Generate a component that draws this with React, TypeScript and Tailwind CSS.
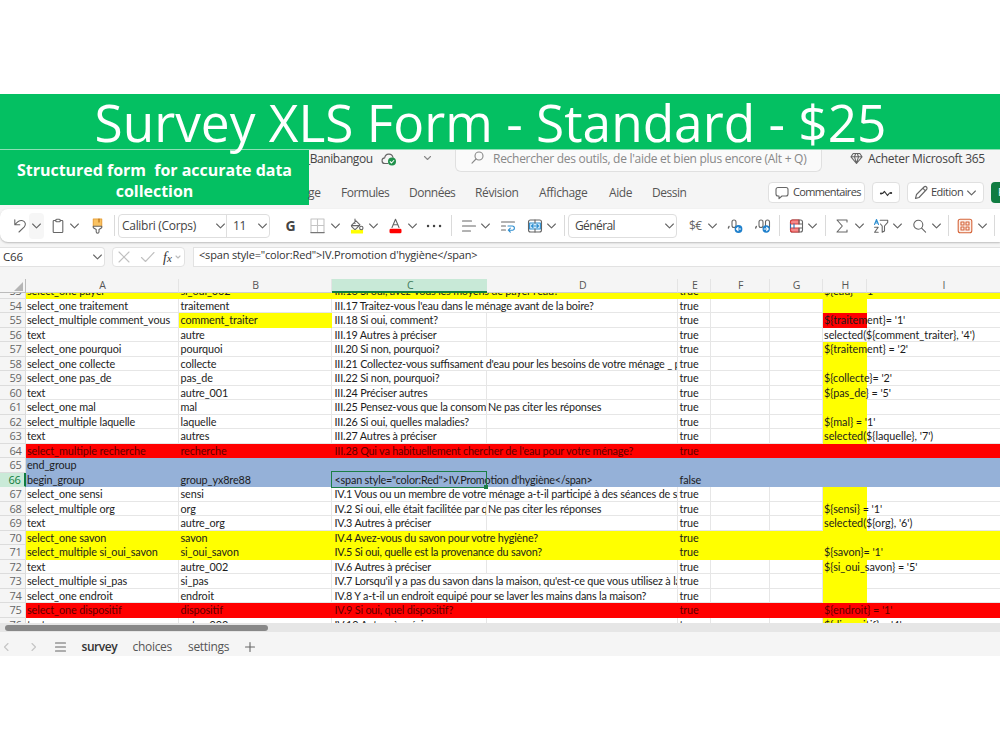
import type { ReactNode } from "react";
import clsx from "clsx";

type Row = {
  n: number;
  a?: string;
  b?: string;
  c?: string;
  d?: string;
  e?: string;
  h?: string;
  fill?: "yellow" | "red" | "blue";
  bFill?: boolean;
  hFill?: "yellow" | "red";
};

const ROWS: Row[] = [
  { n: 53, a: "select_one payer", b: "si_oui_002", c: "III.16 Si oui, avez-vous les moyens de payer l'eau?", e: "true", h: "${eau} = '1'", fill: "yellow" },
  { n: 54, a: "select_one traitement", b: "traitement", c: "III.17 Traitez-vous l'eau dans le ménage avant de la boire?", e: "true", hFill: "yellow" },
  { n: 55, a: "select_multiple comment_vous", b: "comment_traiter", c: "III.18 Si oui, comment?", e: "true", h: "${traitement}= '1'", bFill: true, hFill: "red" },
  { n: 56, a: "text", b: "autre", c: "III.19 Autres à préciser", e: "true", h: "selected(${comment_traiter}, '4')" },
  { n: 57, a: "select_one pourquoi", b: "pourquoi", c: "III.20 Si non, pourquoi?", e: "true", h: "${traitement} = '2'", hFill: "yellow" },
  { n: 58, a: "select_one collecte", b: "collecte", c: "III.21 Collectez-vous suffisament d'eau pour les besoins de votre ménage _ p", e: "true", hFill: "yellow" },
  { n: 59, a: "select_one pas_de", b: "pas_de", c: "III.22 Si non, pourquoi?", e: "true", h: "${collecte}= '2'", hFill: "yellow" },
  { n: 60, a: "text", b: "autre_001", c: "III.24 Préciser autres", e: "true", h: "${pas_de} = '5'", hFill: "yellow" },
  { n: 61, a: "select_one mal", b: "mal", c: "III.25 Pensez-vous que la consommation", d: "Ne pas citer les réponses", e: "true", hFill: "yellow" },
  { n: 62, a: "select_multiple laquelle", b: "laquelle", c: "III.26 Si oui, quelles maladies?", e: "true", h: "${mal} = '1'", hFill: "yellow" },
  { n: 63, a: "text", b: "autres", c: "III.27 Autres à préciser", e: "true", h: "selected(${laquelle}, '7')", hFill: "yellow" },
  { n: 64, a: "select_multiple recherche", b: "recherche", c: "III.28 Qui va habituellement chercher de l'eau pour votre ménage?", e: "true", fill: "red" },
  { n: 65, a: "end_group", fill: "blue" },
  { n: 66, a: "begin_group", b: "group_yx8re88", c: '<span style="color:Red">IV.Promotion d\'hygiène</span>', e: "false", fill: "blue" },
  { n: 67, a: "select_one sensi", b: "sensi", c: "IV.1 Vous ou un membre de votre ménage a-t-il participé à des séances de s", e: "true", hFill: "yellow" },
  { n: 68, a: "select_multiple org", b: "org", c: "IV.2 Si oui, elle était facilitée par qui?", d: "Ne pas citer les réponses", e: "true", h: "${sensi} = '1'", hFill: "yellow" },
  { n: 69, a: "text", b: "autre_org", c: "IV.3 Autres à préciser", e: "true", h: "selected(${org}, '6')", hFill: "yellow" },
  { n: 70, a: "select_one savon", b: "savon", c: "IV.4 Avez-vous du savon pour votre hygiène?", e: "true", fill: "yellow" },
  { n: 71, a: "select_multiple si_oui_savon", b: "si_oui_savon", c: "IV.5 Si oui, quelle est la provenance du savon?", e: "true", h: "${savon}= '1'", fill: "yellow" },
  { n: 72, a: "text", b: "autre_002", c: "IV.6 Autres à préciser", e: "true", h: "${si_oui_savon} = '5'", hFill: "yellow" },
  { n: 73, a: "select_multiple si_pas", b: "si_pas", c: "IV.7 Lorsqu'il y a pas du savon dans la maison, qu'est-ce que vous utilisez à la", e: "true", hFill: "yellow" },
  { n: 74, a: "select_one endroit", b: "endroit", c: "IV.8 Y a-t-il un endroit equipé pour se laver les mains dans la maison?", e: "true", hFill: "yellow" },
  { n: 75, a: "select_one dispositif", b: "dispositif", c: "IV.9 Si oui, quel dispositif?", e: "true", h: "${endroit} = '1'", fill: "red" },
  { n: 76, a: "text", b: "autre_003", c: "IV.10 Autres à préciser", e: "true", h: "${dispositif} = '4'", hFill: "yellow" },
];

const FILL = {
  yellow: "bg-[#ffff00]",
  red: "bg-[#ff0000]",
  blue: "bg-[#95b1d8]",
};

// C text that runs over into an empty D hides the border between them
const LONG = new Set([53, 54, 58, 64, 66, 67, 70, 71, 73, 74]);

function Cell({
  w,
  text,
  fill,
  clip,
  pad = "pl-[1.5px]",
}: {
  w: string;
  text?: string;
  fill?: string;
  clip?: boolean;
  pad?: string;
}) {
  return (
    <div
      className={clsx(
        "h-full shrink-0 whitespace-pre",
        w,
        pad,
        fill,
        clip && "overflow-hidden",
        !fill && "border-r border-b border-[#e6e6e6]",
      )}
    >
      <span className="relative z-10">{text}</span>
    </div>
  );
}

function SheetRow({ row }: { row: Row }) {
  const f = row.fill && FILL[row.fill];
  const long = LONG.has(row.n);
  return (
    <div
      className={clsx(
        "flex h-[14.5px] w-[1010px] text-[10.8px] leading-[14px] tracking-[-0.09px] [font-feature-settings:'liga'_1]",
        row.fill === "red" ? "text-[#5c0000]" : "text-[#1c1c1c]",
      )}
    >
      <div
        className={clsx(
          "w-[25.5px] shrink-0 border-b pr-[3px] text-right font-['Open_Sans',sans-serif] text-[11px] tracking-[-0.3px]",
          row.n === 66
            ? "border-r-2 border-[#caead8] border-r-[#107c41] bg-[#caead8] pr-[2px] text-[#107c41]"
            : "border-r border-[#dcdcdc] bg-[#f5f5f5] text-[#666]",
        )}
      >
        {row.n}
      </div>
      <Cell w="w-[153px]" text={row.a} fill={f} />
      <Cell w="w-[153.5px]" pad="pl-[2px]" text={row.b} fill={f ?? (row.bFill ? FILL.yellow : undefined)} />
      {long ? (
        <Cell w="w-[346px]" pad="pl-[2.5px] tracking-[-0.18px]" text={row.c} fill={f} clip />
      ) : (
        <>
          <Cell w="w-[154.5px]" pad="pl-[2.5px] tracking-[-0.17px]" text={row.c} fill={f} clip={!!row.d} />
          <Cell w="w-[191.5px]" pad="pl-[1.5px] tracking-[-0.17px]" text={row.d} fill={f} />
        </>
      )}
      <Cell w="w-[33px]" text={row.e} fill={f} />
      <Cell w="w-[58.5px]" fill={f} />
      <Cell w="w-[53px]" fill={f} />
      <Cell w="w-[44.5px]" pad="pl-[1.5px] tracking-[-0.03px]" text={row.h} fill={f ?? (row.hFill && FILL[row.hFill])} />
      <Cell w="w-[143px]" fill={f} />
    </div>
  );
}

function Head({ w, label, on }: { w: string; label: string; on?: boolean }) {
  return (
    <div
      className={clsx(
        "flex h-[14px] shrink-0 items-center justify-center pl-[2px] text-[10.5px]",
        w,
        on
          ? "border-b-2 border-[#107c41] bg-[#c8e9d7] pt-px text-[#3f7a5a]"
          : "border-r border-b border-r-[#e4e4e4] border-b-[#d0d0d0] text-[#555]",
      )}
    >
      {label}
    </div>
  );
}

function Icon({ className, children, w = 16 }: { className: string; children: ReactNode; w?: number }) {
  return (
    <svg
      className={clsx("h-4 shrink-0", className)}
      viewBox={`0 0 ${w} 16`}
      fill="none"
      stroke="#666"
      strokeWidth="1.1"
      strokeLinecap="round"
      strokeLinejoin="round"
    >
      {children}
    </svg>
  );
}

function Chevron({ className }: { className?: string }) {
  return (
    <Icon className={clsx("w-[13px]", className)} w={13}>
      <path d="M2.6 6 6.5 9.9 10.4 6" />
    </Icon>
  );
}

function Divider({ className }: { className: string }) {
  return <div className={clsx("h-[21px] w-px shrink-0 bg-[#dadada]", className)} />;
}

function Toolbar() {
  return (
    <div className="flex h-[33px] items-center overflow-hidden rounded-l-lg bg-white shadow-[0_1px_2px_#bbb]">
      <Icon className="ml-[13px] w-[14px]" w={14}>
        <path d="M1.8 1.8v5h5M2 6.6C4.5 3.5 7.3 2 9.8 2.8c2.7.9 3.4 4 1.5 6.1L6 14" />
      </Icon>
      <div className="ml-[2px] flex h-[26px] w-[15px] items-center justify-center rounded bg-[#f6f6f6]">
        <Chevron />
      </div>
      <Icon className="ml-2 w-3" w={12}>
        <path d="M3.7 2.5H2a.8.8 0 0 0-.8.8v10.4c0 .4.4.8.8.8h8c.4 0 .8-.4.8-.8V3.3a.8.8 0 0 0-.8-.8H8.3" />
        <rect x="3.7" y="1.2" width="4.6" height="2.5" rx="1" />
      </Icon>
      <Chevron className="ml-1" />
      <Icon className="ml-[10px] w-[13px]" w={13}>
        <path d="M2.3 1h8.4v7.8H2.3z" fill="#f9c262" stroke="#e8a23c" />
        <path d="M8 1v3" stroke="#b06a10" />
        <path d="M2.3 8.2h8.4v1.5L8 11.5v2.2a1.4 1.4 0 0 1-2.8 0v-2.2L2.3 9.7z" fill="#fff" />
      </Icon>
      <Divider className="ml-[10px]" />
      <div className="ml-[3px] flex h-6 w-[152px] shrink-0 items-center rounded border border-[#dedede] text-[12px] text-[#444]">
        <span className="w-[95px] shrink-0 pt-px pl-[3px] tracking-[-0.3px]">Calibri (Corps)</span>
        <Chevron />
        <span className="-ml-px flex h-full w-[33px] items-center border-l border-[#dedede] pt-px pl-[6px] tracking-[-0.4px]">11</span>
        <Chevron className="-ml-[2px]" />
      </div>
      <span className="ml-[13px] w-[15px] text-center text-[14px] font-bold text-[#444]">G</span>
      <Icon className="ml-3 w-[15px]" w={15}>
        <path d="M1 1h13v13M1 1v13M7.5 1v13M1 7.5h13" stroke="#c4c4c4" />
        <path d="M.8 14.6h13.4" stroke="#777" />
      </Icon>
      <Chevron className="ml-1" />
      <Icon className="ml-[7px] w-4">
        <path d="M2.5 12.2h11V15h-11z" fill="#ff0" stroke="#ff0" />
        <path d="M7 2.8 2.7 7.2a1 1 0 0 0 0 1.4l2.6 2.6a1 1 0 0 0 1.4 0L11 6.8 7 2.8zM3 7.6h7M6 1v4.5" />
        <circle cx="12.3" cy="10" r="1.7" />
      </Icon>
      <Chevron className="ml-[2px]" />
      <Icon className="ml-2 w-[15px]" w={15}>
        <path d="m4 9.5 3.5-8.3L11 9.5M5.2 6.7h4.6" />
        <rect x="1.5" y="10.7" width="12" height="4.6" rx="1.4" fill="#f00" stroke="none" />
      </Icon>
      <Chevron className="ml-[3px]" />
      <Icon className="ml-[7px] w-4">
        <path d="M2 8h.1M8 8h.1M14 8h.1" stroke="#444" strokeWidth="2.4" />
      </Icon>
      <Divider className="ml-[9px]" />
      <Icon className="ml-[9px] w-4">
        <path d="M1.5 3h9M1.5 8h13M1.5 13h8" />
      </Icon>
      <Chevron className="ml-[2px]" />
      <Icon className="ml-2 w-4">
        <path d="M1.5 4h13M1.5 8h4M1.5 12h4" />
        <path d="M8 8h4.3a2.1 2.1 0 0 1 0 4.2H8.5m1.8-2-2 2 2 2" stroke="#2f8fd0" />
      </Icon>
      <Icon className="ml-[11px] w-4">
        <rect x="1.5" y="2" width="13" height="12" rx="2" />
        <rect x="2.6" y="5" width="10.8" height="6" fill="#d5ecfb" stroke="#2f8fd0" />
        <path d="M4.5 8h7M6 6.5 4.5 8 6 9.5M10 6.5 11.5 8 10 9.5" stroke="#2f8fd0" />
        <path d="M8 2v3M8 11v3" />
      </Icon>
      <Chevron className="ml-[2px]" />
      <Divider className="ml-[6px]" />
      <div className="ml-[3px] flex h-6 w-[109px] shrink-0 items-center justify-between rounded border border-[#dedede] pl-[6px] text-[12px] text-[#444]">
        <span className="pt-px tracking-[-0.6px]">Général</span>
        <Chevron />
      </div>
      <span className="ml-3 w-4 text-[12px] tracking-[-0.6px] text-[#666]">$€</span>
      <Chevron className="ml-px" />
      <Icon className="ml-2 w-4">
        <path d="M2 8.5 1.4 10" strokeWidth="1.4" />
        <rect x="5" y="2" width="4" height="7.5" rx="2" />
        <circle cx="11.5" cy="11" r="3.9" fill="#1f80cc" stroke="none" />
        <path d="M13.5 11h-4m1.6-1.6L9.5 11l1.6 1.6" stroke="#fff" />
      </Icon>
      <Icon className="ml-3 w-4">
        <path d="M1.3 8.5.7 10" strokeWidth="1.4" />
        <rect x="4" y="2" width="4" height="7.5" rx="2" />
        <rect x="10.5" y="2" width="4" height="9.5" rx="2" />
        <circle cx="11.2" cy="11" r="3.7" fill="#1f80cc" stroke="none" />
        <path d="M9.2 11h4m-1.6-1.6 1.6 1.6-1.6 1.6" stroke="#fff" />
      </Icon>
      <Divider className="ml-2" />
      <Icon className="ml-[9px] w-[15px]" w={15}>
        <rect x="1.5" y="2" width="12" height="12" rx="2" fill="#fff" />
        <path d="M1.5 6V4a2 2 0 0 1 2-2H10v4zM1.5 10h8.5v4H3.5a2 2 0 0 1-2-2z" fill="#f58a8a" stroke="#d83b3b" />
        <path d="M5 6v4M1.5 6v4" stroke="#2f6fb0" />
        <path d="M10 6h3.5M10 10h3.5M10 2v4M10 10v4" />
      </Icon>
      <Chevron className="ml-[2px]" />
      <Divider className="ml-[6px]" />
      <Icon className="ml-[9px] w-[14px]" w={14}>
        <path d="M12 4V2H2l5.3 6L2 14h10v-2" />
      </Icon>
      <Chevron className="ml-1" />
      <Icon className="ml-[7px] w-4">
        <path d="m1.5 6.5 2-5 2 5M2.2 5h2.6" stroke="#2f8fd0" />
        <path d="M1.6 9.2h3.6l-3.6 5h3.6M7.2 2.3h7.5v2L11.5 8v5l-2.3 1.2V8L7.5 6" />
      </Icon>
      <Chevron className="ml-[2px]" />
      <Icon className="ml-2 w-[15px]" w={15}>
        <circle cx="6.3" cy="6.8" r="4.5" />
        <path d="m9.6 10.1 4 4" />
      </Icon>
      <Chevron className="ml-[3px]" />
      <Divider className="ml-[5px]" />
      <Icon className="ml-2 w-4">
        <g stroke="#d5653a">
          <rect x="1.2" y="1.2" width="13.6" height="13.6" rx="2" fill="#fdf0ea" />
          <path d="M4 4h3v3H4zM9 4h3v3H9zM4 9h3v3H4zM9 9h3v3H9z" />
        </g>
      </Icon>
      <Chevron className="ml-[3px]" />
      <Divider className="ml-[5px]" />
    </div>
  );
}

function TopBar() {
  return (
    <div className="flex h-[59px]">
      <div className="flex h-[55px] w-[309px] shrink-0 items-center justify-center bg-[#04c062] pt-[7px] text-center text-[16px] leading-[21.5px] font-bold tracking-[-0.02px] whitespace-pre text-white">
        {"Structured form  for accurate data\ncollection"}
      </div>
      <div className="min-w-0 flex-1">
        <div className="flex h-[22px] text-[12px] leading-[18px] text-[#444]">
          <div className="w-[72px] shrink-0 overflow-hidden">
            <span className="-ml-[4px] tracking-[-0.45px]">_Banibangou</span>
          </div>
          <Icon className="mt-px w-4">
            <path d="M7 12.5H4a2.8 2.8 0 0 1-.3-5.6A4.2 4.2 0 0 1 12 6.5" />
            <circle cx="11" cy="10.6" r="4" fill="#20914b" stroke="none" />
            <path d="m9.2 10.7 1.3 1.3 2.3-2.5" stroke="#fff" />
          </Icon>
          <Icon className="ml-[25px] w-[11px]" w={11}>
            <path d="m2.5 6.5 3 3 3-3" stroke="#888" />
          </Icon>
          <div className="ml-[22px] flex w-[367px] shrink-0 rounded-b-md border border-t-0 border-[#e0e0e0] bg-[#fafafa] pl-[15px] text-[#888]">
            <Icon className="w-[13px]" w={13}>
              <circle cx="8" cy="6" r="4" stroke="#888" />
              <path d="m5 9-4 4.2" stroke="#888" />
            </Icon>
            <span className="ml-[9px] whitespace-nowrap tracking-[-0.28px]">
              Rechercher des outils, de l'aide et bien plus encore (Alt + Q)
            </span>
          </div>
          <Icon className="mt-[1px] ml-[28px] w-[13px]" w={13}>
            <path d="M3.2 2.5h6.6L12 5.8 6.5 12.5 1 5.8zM1 5.8h11M4.5 5.8l2 6.5 2-6.5-1.2-3.3M4.5 5.8l1.2-3.3" />
          </Icon>
          <span className="ml-[5px] whitespace-nowrap tracking-[-0.3px] text-[#444]">Acheter Microsoft 365</span>
        </div>
        <div className="flex h-[37px] items-center pt-[6px] pb-[2px] text-[12px] tracking-[-0.38px] text-[#555]">
          <span className="-ml-px w-[33px] shrink-0">ge</span>
          <span className="w-[68px] shrink-0 tracking-[-0.5px]">Formules</span>
          <span className="w-[66px] shrink-0 tracking-[-0.5px]">Données</span>
          <span className="w-[64px] shrink-0">Révision</span>
          <span className="w-[70px] shrink-0">Affichage</span>
          <span className="w-[43px] shrink-0">Aide</span>
          <span className="w-[116px] shrink-0 tracking-[-0.5px]">Dessin</span>
          <div className="flex h-[21px] w-[97px] shrink-0 items-center rounded border border-[#e0e0e0] bg-white pl-[6px] text-[11px] tracking-[-0.65px] text-[#444]">
            <Icon className="w-[14px]" w={14}>
              <path d="M3 2.5h8a2 2 0 0 1 2 2V9a2 2 0 0 1-2 2H7l-3 2.7V11H3a2 2 0 0 1-2-2V4.5a2 2 0 0 1 2-2z" />
            </Icon>
            <span className="ml-1">Commentaires</span>
          </div>
          <div className="ml-[7px] flex h-[21px] w-[28px] shrink-0 items-center justify-center rounded border border-[#e0e0e0] bg-white">
            <Icon className="w-4">
              <path d="M3 8.5h1.5L6.5 6.5l3 4 2-2.5H13" stroke="#333" strokeWidth="1.2" />
              <path d="M3 8.5h.1M13 8h.1" stroke="#333" strokeWidth="2.2" />
            </Icon>
          </div>
          <div className="ml-[7px] flex h-[21px] w-[77px] shrink-0 items-center rounded border border-[#e0e0e0] bg-white pl-[6px] text-[11px] tracking-[-0.5px] text-[#444]">
            <Icon className="w-[14px]" w={14}>
              <path d="m1.5 13.5 1-4L10 2a1.5 1.5 0 0 1 2.5 2.5l-7.5 8zM8.8 3.2l2.6 2.6" />
            </Icon>
            <span className="ml-[3px] w-[33px]">Edition</span>
            <Chevron className="ml-px" />
          </div>
          <div className="ml-[7px] h-[21px] w-[20px] shrink-0 overflow-hidden rounded bg-[#107c41] pl-[7px] text-[11px] leading-5 text-white">
            P
          </div>
        </div>
      </div>
    </div>
  );
}

function FormulaBar() {
  return (
    <div className="flex h-[37px] items-start pt-[5px] text-[11px] text-[#333]">
      <div className="flex h-[20px] w-[105px] shrink-0 items-center justify-between rounded-r border border-l-0 border-[#e2e2e2] bg-white pl-[3px]">
        <span className="text-[11.5px] tracking-[-0.2px]">C66</span>
        <Chevron />
      </div>
      <div className="ml-[7px] flex h-[20px] w-[73px] shrink-0 items-center rounded border border-[#e2e2e2] bg-white">
        <Icon className="ml-[3px] w-4">
          <path d="m3 3 10 10M13 3 3 13" stroke="#c0c0c0" />
        </Icon>
        <Icon className="ml-[8px] w-4">
          <path d="m1.5 8.5 4 4L14 3.5" stroke="#c0c0c0" />
        </Icon>
        <span className="ml-[7px] font-['Liberation_Serif',serif] text-[14px] italic">
          f<span className="text-[11px]">x</span>
        </span>
        <Icon className="ml-[2px] w-2" w={8}>
          <path d="m2 7 2 2 2-2" stroke="#bbb" />
        </Icon>
      </div>
      <div className="ml-2 flex h-[20px] flex-1 items-center border border-r-0 border-[#e2e2e2] bg-white pb-[3px] pl-[5px] tracking-[-0.18px] whitespace-nowrap">
        {'<span style="color:Red">IV.Promotion d\'hygiène</span>'}
      </div>
    </div>
  );
}

export default function App() {
  return (
    <div className="h-[750px] w-[1000px] overflow-hidden bg-white pt-[94px] font-['Open_Sans',sans-serif]">
      <h1 className="relative z-20 flex h-[55px] justify-center bg-[#04c062] pr-[19px] text-[51.4px] leading-[56px] font-normal whitespace-nowrap text-white">
        Survey XLS Form - Standard - $25
      </h1>
      <div className="bg-[#f5f5f5]">
        <div className="h-px bg-[#8fdfb5]" />
        <TopBar />
        <Toolbar />
        <FormulaBar />
        <div className="flex h-[14px] w-[1010px]">
          <div className="flex w-[25.5px] shrink-0 items-end justify-end border-r border-b border-[#bbb] pr-[2px] pb-px">
            <svg className="size-[9px]" viewBox="0 0 9 9">
              <path d="M9 0v9H0z" fill="#b5b5b5" />
            </svg>
          </div>
          <Head w="w-[153px]" label="A" />
          <Head w="w-[153.5px]" label="B" />
          <Head w="w-[154.5px]" label="C" on />
          <Head w="w-[191.5px]" label="D" />
          <Head w="w-[33px]" label="E" />
          <Head w="w-[58.5px]" label="F" />
          <Head w="w-[53px]" label="G" />
          <Head w="w-[44.5px]" label="H" />
          <Head w="w-[153px]" label="I" />
        </div>
        <div className="relative flex h-[330px] flex-col justify-start overflow-hidden bg-white font-['Lato',sans-serif]">
          <div className="-mt-[9px]">
            {ROWS.map((r) => (
              <SheetRow key={r.n} row={r} />
            ))}
          </div>
          {/* active cell outline */}
          <div className="absolute top-[178px] left-[331px] z-20 h-[17px] w-[156px] border border-[#1c7f45]">
            <div className="absolute -right-[2px] -bottom-[2px] size-[4px] bg-[#1c7f45]" />
          </div>
        </div>
        <div className="flex h-[9px] items-center bg-[#e6e6e6] pl-[5px]">
          <div className="h-[6px] w-[263px] rounded-full bg-[#888]" />
        </div>
        <div className="flex h-[24px] items-center pt-[5px] text-[12px] text-[#555]">
          <Icon className="ml-[1px] w-[10px]" w={10}>
            <path d="M7 4.5 3.5 8 7 11.5" stroke="#c4c4c4" />
          </Icon>
          <Icon className="ml-[18px] w-[10px]" w={10}>
            <path d="M3 4.5 6.500 8 3 11.5" stroke="#c4c4c4" />
          </Icon>
          <Icon className="ml-[15px] w-[13px]" w={13}>
            <path d="M1.5 4h10M1.5 8h10M1.5 12h10" />
          </Icon>
          <span className="ml-[14.5px] w-[51px] font-semibold tracking-[-0.45px] text-[#333]">survey</span>
          <span className="w-[55.5px] tracking-[-0.3px]">choices</span>
          <span className="w-[56px] tracking-[-0.3px]">settings</span>
          <Icon className="w-[12px]" w={12}>
            <path d="M6 3.5v9M1.5 8h9" />
          </Icon>
        </div>
      </div>
    </div>
  );
}
